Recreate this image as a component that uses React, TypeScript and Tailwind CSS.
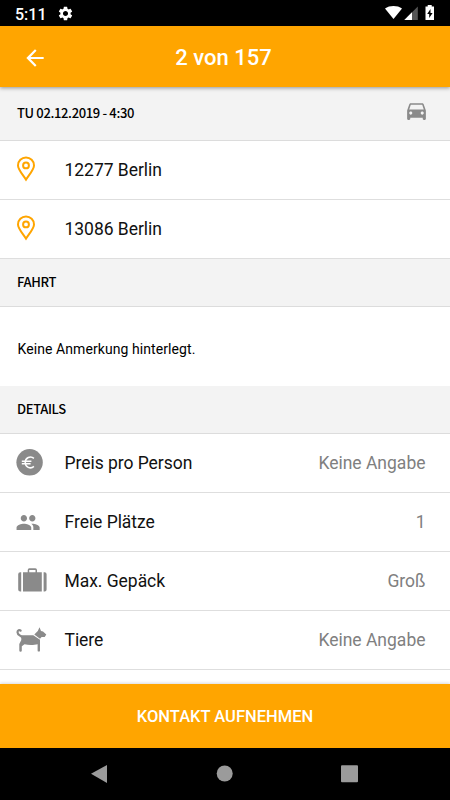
import React from 'react';
import { MdSettings, MdArrowBack, MdDirectionsCar } from 'react-icons/md';

type RowProps = {
  icon: React.ReactNode;
  label: string;
  value?: string;
};

const PinIcon: React.FC = () => (
  <svg width="32" height="32" viewBox="0 0 32 32" fill="none" stroke="#ffa500" strokeWidth="2">
    <path d="M10 25.6C7.2 21.2 2 15.5 2 11.4a8 7.9 0 0 1 16 0c0 4.1-5.2 9.8-8 14.2z" />
    <circle cx="10" cy="11.4" r="2.9" />
  </svg>
);

const EuroIcon: React.FC = () => (
  <svg width="32" height="32" viewBox="0 0 32 32" fill="none">
    <circle cx="13.6" cy="15.3" r="13.2" fill="#8a8a8a" />
    <path
      d="M17.9 11.4a5.1 5.1 0 0 0-8.6 4 5.1 5.1 0 0 0 8.6 4M5.8 14.2h9.6M5.8 16.8h8.8"
      stroke="#fff"
      strokeWidth="1.5"
    />
  </svg>
);

const PeopleIcon: React.FC = () => (
  <svg width="32" height="32" viewBox="0 0 32 32" fill="#8a8a8a">
    <path
      transform="translate(-.5 3.6) scale(1.05 1.08)"
      d="M16 11c1.66 0 2.99-1.34 2.99-3S17.66 5 16 5c-1.66 0-3 1.34-3 3s1.34 3 3 3zm-8 0c1.66 0 2.99-1.34 2.99-3S9.66 5 8 5C6.34 5 5 6.34 5 8s1.34 3 3 3zm0 2c-2.33 0-7 1.17-7 3.5V19h14v-2.5c0-2.33-4.67-3.5-7-3.5zm8 0c-.29 0-.62.02-.97.05 1.16.84 1.97 1.97 1.97 3.45V19h6v-2.5c0-2.33-4.67-3.5-7-3.5z"
    />
  </svg>
);

const LuggageIcon: React.FC = () => (
  <svg width="32" height="32" viewBox="0 0 32 32" fill="#8a8a8a">
    <path d="M5.2 7.3v19.2h-1a2 2 0 0 1-2-2V9.3a2 2 0 0 1 2-2zM27.6 7.3v19.2h1a2 2 0 0 0 2-2V9.3a2 2 0 0 0-2-2z" />
    <path d="M7 7.3h4.7V5a1.7 1.7 0 0 1 1.7-1.7h5.9A1.7 1.7 0 0 1 21 5v2.3h4.8v19.2H7zM13.2 7.3h6.3V4.9h-6.3z" fillRule="evenodd" />
  </svg>
);

const DogIcon: React.FC = () => (
  <svg width="32" height="32" viewBox="0 0 32 32" fill="#8a8a8a">
    <path d="M4.6 6.6C3.4 5.4 1.5 6.2 1.5 8.2c0 2.6 2.5 3 4.5 4.8" fill="none" stroke="#8a8a8a" strokeWidth="2.2" strokeLinecap="round" />
    <path d="M5.2 11.3h12.1l6.7 4.5v10.6a1.2 1.2 0 0 1-2.4 0v-6.2c-3.5 1-9.3 1-13.1.1l-2.7 2v4.1a1.2 1.2 0 0 1-2.5 0v-6.3l2-4.2z" />
    <path d="M18.3 10.5 21.8 7 23.5 3.3 25 6.9 27 7.6 30.3 10.5 28.7 12.9 25.6 13.1 24 14.8z" />
  </svg>
);

const Section: React.FC<{ title: string }> = ({ title }) => (
  <div className="h-12 shrink-0 flex items-center border-b border-[#dcdcdc] bg-[#f3f3f3] px-[17px] pb-0.5">
    <h2 className="font-['Noto_Sans_CJK_JP',sans-serif] text-[13px] leading-none font-medium tracking-[-0.35px]">{title}</h2>
  </div>
);

const Row: React.FC<RowProps> = ({ icon, label, value }) => (
  <div className="h-[59px] shrink-0 flex items-center border-b border-[#dedede] pl-4 pr-[24.5px] text-[17.5px]">
    <div className="w-[48.5px]">{icon}</div>
    <span className="flex-1 pt-px tracking-[-0.04px] text-[#111]">{label}</span>
    <span className="pt-px text-[#808080]">{value}</span>
  </div>
);

const StatusBar: React.FC = () => (
  <div className="h-[26px] shrink-0 flex items-center bg-black px-[15px] text-white">
    <span className="text-[16px] font-medium leading-none pt-[3px]">5:11</span>
    <MdSettings className="ml-2.5" size={17} />
    <svg className="ml-auto" width="50" height="26" viewBox="0 0 50 26" fill="#fff">
      <path d="M0 8.5C4.5 5.2 12.5 5.2 17 8.5L8.5 19z" />
      <path d="M19.3 20 32.8 6.5V20z" fill="#555" />
      <path d="M19.3 20 27 12.3V20z" />
      <path fillRule="evenodd" d="M42.7 5h4v1.5H49V20h-8.5V6.5h2.2zM45.5 9l-3.3 5h2v4l3.4-5h-2.1z" />
    </svg>
  </div>
);

const App: React.FC = () => {
  return (
    <div className="h-[800px] w-[450px] flex flex-col overflow-hidden bg-white font-[Roboto,sans-serif] text-black">
      <StatusBar />
      <header className="z-10 h-[61px] shrink-0 grid grid-cols-[70px_1fr_73px] items-center bg-[#ffa500] text-white shadow-[0_1px_4px_rgba(0,0,0,0.4)]">
        <MdArrowBack className="ml-[22px] mt-[3px]" size={26} />
        <h1 className="pt-0.5 text-center text-[22px] font-medium">2 von 157</h1>
      </header>

      <main className="flex-1 min-h-0 flex flex-col overflow-hidden">
        <div className="h-[54px] shrink-0 flex items-center justify-between border-b border-[#dcdcdc] bg-[#f3f3f3] pl-[17px] pr-[21px] pb-0.5">
          <h2 className="font-['Noto_Sans_CJK_JP',sans-serif] text-[13px] leading-none font-medium tracking-[-0.35px]">TU 02.12.2019 - 4:30</h2>
          <MdDirectionsCar className="mb-[5px] text-[#8a8a8a]" size={25} />
        </div>
        <Row icon={<PinIcon />} label="12277 Berlin" />
        <Row icon={<PinIcon />} label="13086 Berlin" />
        <Section title="FAHRT" />
        <p className="h-[79px] shrink-0 flex items-center px-[17.5px] pt-1.5 text-[14px] tracking-[0.08px]">
          Keine Anmerkung hinterlegt.
        </p>
        <Section title="DETAILS" />
        <Row icon={<EuroIcon />} label="Preis pro Person" value="Keine Angabe" />
        <Row icon={<PeopleIcon />} label="Freie Plätze" value="1" />
        <Row icon={<LuggageIcon />} label="Max. Gepäck" value="Groß" />
        <Row icon={<DogIcon />} label="Tiere" value="Keine Angabe" />
      </main>

      <button className="z-10 h-16 shrink-0 bg-[#ffa500] pt-0.5 text-[16.5px] font-medium text-white shadow-[0_-1px_3px_rgba(0,0,0,0.15)]">
        KONTAKT AUFNEHMEN
      </button>
      <nav className="h-[52px] shrink-0 bg-black">
        <svg width="450" height="52" viewBox="0 0 450 52" fill="#9b9b9b">
          <path d="M91 25.8 107 17v18z" />
          <circle cx="224.7" cy="25.5" r="8" />
          <rect x="341" y="17.3" width="17" height="17" rx="1" />
        </svg>
      </nav>
    </div>
  );
};

export default App;
